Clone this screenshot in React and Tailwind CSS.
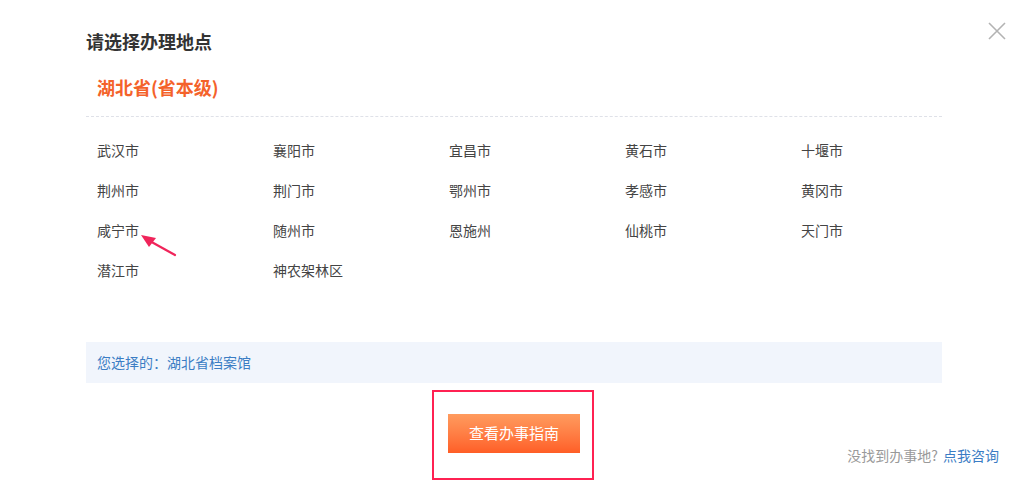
import React from 'react';

const cities = [
  '武汉市', '襄阳市', '宜昌市', '黄石市', '十堰市',
  '荆州市', '荆门市', '鄂州市', '孝感市', '黄冈市',
  '咸宁市', '随州市', '恩施州', '仙桃市', '天门市',
  '潜江市', '神农架林区',
];

const App = () => {
  return (
    <div
      className="relative w-[1029px] h-[484px] bg-white overflow-hidden"
      style={{ fontFamily: '"Noto Sans CJK SC", "Noto Sans", sans-serif' }}
    >
      {/* close */}
      <button className="absolute right-[22px] top-[21px] w-[20px] h-[20px] text-[#b3b3b3]">
        <svg viewBox="0 0 20 20" width="20" height="20" stroke="currentColor" strokeWidth="1.6">
          <path d="M2 2 L18 18 M18 2 L2 18" />
        </svg>
      </button>

      <div className="w-[856px] ml-[86px] pt-[28px]">
        <h2 className="text-[18px] leading-[26px] font-bold text-[#333]">请选择办理地点</h2>

        <div className="mt-[20px] px-[11px] text-[18px] leading-[26px] font-bold text-[#f4622a]">
          湖北省(省本级)
        </div>

        <div className="mt-[16px] border-t border-dashed border-[#dfe1e8]" />

        <div className="grid grid-cols-[repeat(5,176px)] px-[11px] pt-[21px]">
          {cities.map((c) => (
            <div key={c} className="h-[40px] text-[14px] leading-[24px] text-[#444]">
              {c}
            </div>
          ))}
        </div>

        <div className="mt-[44px] h-[41px] bg-[#f1f5fc] px-[11px] flex items-center text-[14px] text-[#3b7dc4]">
          您选择的：湖北省档案馆
        </div>

        <div className="grid grid-cols-[346px_auto_1fr] mt-[7px]">
          <div />
          <div className="border-2 border-[#ff2152] w-[162px] h-[90px] pt-[22px] pl-[14px]">
            <button className="w-[132px] h-[39px] text-white text-[15px] bg-gradient-to-b from-[#ff9b5e] to-[#ff5e26]">
              查看办事指南
            </button>
          </div>
          <div className="flex justify-end items-start pt-[53px] -mr-[57px] text-[14px] leading-[24px]">
            <span className="text-[#999]">没找到办事地?</span>
            <span className="ml-[5px] text-[#3b7dc4]">点我咨询</span>
          </div>
        </div>
      </div>

      {/* annotation arrow */}
      <svg className="absolute left-[138px] top-[230px]" width="42" height="30" viewBox="0 0 42 30">
        <path d="M37 25 L10 10" stroke="#f0245a" strokeWidth="2.2" strokeLinecap="round" />
        <path d="M3 5 L18 8 L11 17 Z" fill="#f0245a" />
      </svg>
    </div>
  );
};

export default App;
